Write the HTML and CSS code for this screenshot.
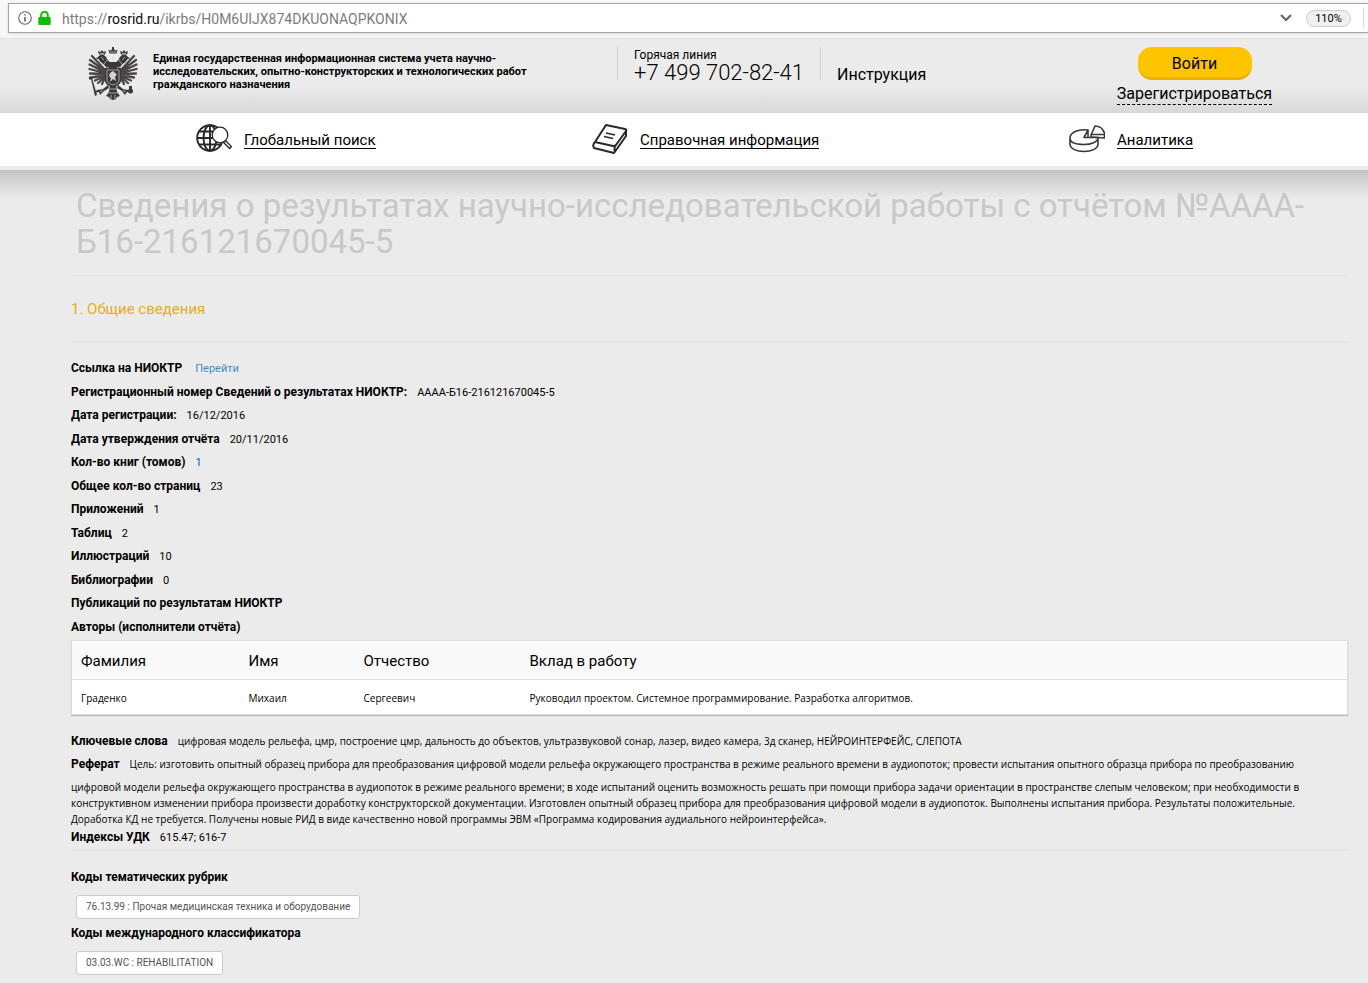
FILE: index.html
```html
<!DOCTYPE html>
<html lang="ru">
<head>
<meta charset="utf-8">
<title>Сведения о результатах научно-исследовательской работы</title>
<link rel="stylesheet" href="styles.css">
</head>
<body>
<div class="browser-bar">
  <div class="address">
    <svg class="info" viewBox="0 0 14 14" width="14" height="14"><circle cx="7" cy="7" r="6.3" fill="none" stroke="#666" stroke-width="1.1"/><path d="M7 6v4.5M7 3.2v1.4" stroke="#555" stroke-width="1.5"/></svg>
    <svg class="lock" viewBox="0 0 13 14" width="13" height="14"><path d="M3.2 7V4a3.3 3.3 0 0 1 6.6 0v3" fill="none" stroke="#12bc00" stroke-width="2"/><rect x=".3" y="6" width="12.4" height="8" rx="1" fill="#12bc00"/></svg>
    <div class="url">https://<span class="domain">rosrid.ru</span>/ikrbs/H0M6UIJX874DKUONAQPKONIX</div>
    <svg class="chevron" viewBox="0 0 12 8" width="12" height="8"><path d="M1 1l5 5 5-5" fill="none" stroke="#666" stroke-width="2.2"/></svg>
    <button class="zoom" type="button">110%</button>
    <span class="bar-divider"></span>
  </div>
</div>

<header class="header">
  <svg class="emblem" viewBox="0 0 50 54" width="50" height="54">
    <g fill="none" stroke="#4a4647" stroke-width="2.300" stroke-linecap="round">
      <path d="M17 23L4 9M17 24L2 13M17 25L1.500 17.500M17 26L1.500 22M17 27L2 26.500M17 28L4 30.500M17 29L7 33.500M17 30L10 36M17 31L14 37"/>
      <path d="M33 23L46 9M33 24L48 13M33 25L48.500 17.500M33 26L48.500 22M33 27L48 26.500M33 28L46 30.500M33 29L43 33.500M33 30L40 36M33 31L36 37"/>
    </g>
    <g fill="#3b3838">
      <path d="M21.500 6.500L20.500 3l2.500.5L24 2V0h2v2l1 1.500 2.500-.5-1 3.500z"/>
      <path d="M19 12c-1-4-6-6-9-2l-2.500 1.500 3 .5c1 3 4 4 6 6l3 5 5.500-1 5.500 1 3-5c2-2 5-3 6-6l3-.5L40 10c-3-4-8-2-9 2-1 2-3 3-3 3h-6s-2-1-3-3z"/>
      <path d="M11 7.500L10 4l2.500 1 1.500-2 1.500 2L18 4l-1 3.500zM33 7.500L32 4l2.500 1L36 3l1.500 2L40 4l-1 3.500z"/>
      <path d="M17 21h16v13c0 3-4 5-8 7-4-2-8-4-8-7z"/>
      <path d="M22 38h6l1 7 3 4-3 1-1 2-3 1-3-1-1-2-3-1 3-4z"/>
      <path d="M20 38l-5 4-6 1-3 3 5-1 1 3 4-4 5-3zM30 38l5 4 5 1 4 3-5-1-2 3-3-4-5-3z"/>
      <path d="M4 31l5 17-2 1-4-17z"/><circle cx="2.500" cy="31" r="1.800"/><circle cx="42.500" cy="44" r="2.500"/><path d="M41 39h3v3h-3z"/>
    </g>
    <g fill="none" stroke="#d4d2d2" stroke-width=".7">
      <path d="M19 23h12v10c0 3-3 4-6 5-3-1-6-2-6-5zM20 12l-4 5M30 12l4 5M22 5h6M25 9v6M12 6.500h4M34 6.500h4M13 10l3 3M37 10l-3 3M22 42h6M21 46h8M23 48v4M27 48v4M15 43l-3 2M35 43l3 2M18 20l3 1M32 20l-3 1"/>
    </g>
    <path d="M22 26l3-2 2 2 2 1-2 3 1 4-3-2-3 3 1-4-2-2z" fill="#d5d3d3"/>
  </svg>
  <p class="system-name">Единая государственная информационная система учета научно-<br>исследовательских, опытно-конструкторских и технологических работ<br>гражданского назначения</p>
  <div class="hotline"><span class="hotline-label">Горячая линия</span><span class="phone">+7 499 702-82-41</span></div>
  <a class="manual" href="#">Инструкция</a>
  <div class="account"><button class="login" type="button">Войти</button><a class="register" href="#">Зарегистрироваться</a></div>
</header>

<nav class="nav">
  <a href="#">
    <svg viewBox="0 0 36 30" width="36" height="30" fill="none" stroke="#2b2728"><g stroke-width="1.900"><circle cx="14" cy="14" r="12.8"/><path d="M14 1v26M1 14h18M3 7.500h18M3 20.500h23"/><ellipse cx="14" cy="14" rx="6.500" ry="12.800"/></g><path d="M28 17l7 7" stroke-width="4"/><path d="M29 18l5 5" stroke="#fff" stroke-width="1.200"/><circle cx="24" cy="11" r="7.800" fill="#fff" stroke-width="1.300"/></svg>
    <span>Глобальный поиск</span></a>
  <a href="#">
    <svg viewBox="0 0 36 30" width="36" height="30" fill="none" stroke="#2b2728" stroke-width="2" stroke-linejoin="round"><path d="M14 1l19 4q2 1 1 2L24 21q-1 1-3 1L3 18z"/><path d="M3 18q-3 3-1 6l20 5 12-17V7M23 22q-1 4 0 6"/><path d="M14 9l9 2M12 12.500l9 2" stroke-width="1.500"/></svg>
    <span>Справочная информация</span></a>
  <a href="#">
    <svg viewBox="0 0 36 30" width="36" height="30" fill="none" stroke="#3a3738" stroke-width="1.600" stroke-linejoin="round"><path d="M19 6C9 4.500 1 9 1 14s7 6.500 14 6.500S29 18 29 13.500L15 13.500l4-7.500v7.500M1 14v6c0 5 7 7.500 14 7.500s14-2.500 14-7.500v-6.500"/><path d="M22 11l4-9c5 0 8 3 9.500 7v5L22 13zM22 10.500h13"/></svg>
    <span>Аналитика</span></a>
</nav>

<main class="content">
  <h1>Сведения о результатах научно-исследовательской работы с отчётом №АААА-<br>Б16-216121670045-5</h1>
  <h2>1. Общие сведения</h2>
  <dl class="facts">
    <div><dt>Ссылка на НИОКТР</dt><dd><a href="#">Перейти</a></dd></div>
    <div><dt>Регистрационный номер Сведений о результатах НИОКТР:</dt><dd>АААА-Б16-216121670045-5</dd></div>
    <div><dt>Дата регистрации:</dt><dd>16/12/2016</dd></div>
    <div><dt>Дата утверждения отчёта</dt><dd>20/11/2016</dd></div>
    <div><dt>Кол-во книг (томов)</dt><dd class="volume">1</dd></div>
    <div><dt>Общее кол-во страниц</dt><dd>23</dd></div>
    <div><dt>Приложений</dt><dd>1</dd></div>
    <div><dt>Таблиц</dt><dd>2</dd></div>
    <div><dt>Иллюстраций</dt><dd>10</dd></div>
    <div><dt>Библиографии</dt><dd>0</dd></div>
    <div><dt>Публикаций по результатам НИОКТР</dt></div>
    <div><dt>Авторы (исполнители отчёта)</dt></div>
  </dl>
  <table class="authors">
    <colgroup><col class="c1"><col class="c2"><col class="c3"><col></colgroup>
    <thead><tr><th>Фамилия</th><th>Имя</th><th>Отчество</th><th>Вклад в работу</th></tr></thead>
    <tbody><tr><td>Граденко</td><td>Михаил</td><td>Сергеевич</td><td>Руководил проектом. Системное программирование. Разработка алгоритмов.</td></tr></tbody>
  </table>
  <div class="abstract">
    <p class="lead"><b>Ключевые слова</b>цифровая модель рельефа, цмр, построение цмр, дальность до объектов, ультразвуковой сонар, лазер, видео камера, 3д сканер, НЕЙРОИНТЕРФЕЙС, СЛЕПОТА</p>
    <p class="lead"><b>Реферат</b>Цель: изготовить опытный образец прибора для преобразования цифровой модели рельефа окружающего пространства в режиме реального времени в аудиопоток; провести испытания опытного образца прибора по преобразованию</p>
    <p class="rest">цифровой модели рельефа окружающего пространства в аудиопоток в режиме реального времени; в ходе испытаний оценить возможность решать при помощи прибора задачи ориентации в пространстве слепым человеком; при необходимости в<br>конструктивном изменении прибора произвести доработку конструкторской документации. Изготовлен опытный образец прибора для преобразования цифровой модели в аудиопоток. Выполнены испытания прибора. Результаты положительные.<br>Доработка КД не требуется. Получены новые РИД в виде качественно новой программы ЭВМ «Программа кодирования аудиального нейроинтерфейса».</p>
    <p class="udk"><b>Индексы УДК</b>615.47; 616-7</p>
  </div>
  <section class="codes">
    <h3>Коды тематических рубрик</h3>
    <span class="tag">76.13.99 : Прочая медицинская техника и оборудование</span>
    <h3>Коды международного классификатора</h3>
    <span class="tag">03.03.WC : REHABILITATION</span>
    <h3>Коды классификаций</h3>
  </section>
</main>
</body>
</html>
```
FILE: styles.css
```css
* { box-sizing: border-box; }
body { margin: 0; background: #ebebeb; color: #000; font-family: Roboto, "Noto Sans", sans-serif; font-size: 11px; }
h1, h2, h3, p, dl, dd { margin: 0; }
a { color: inherit; text-decoration: none; }
button { font-family: inherit; color: inherit; }

.browser-bar { background: #f7f7f7; height: 39px; padding: 3px 0 0 8px; border-bottom: 1px solid #e0e0e0; }
.address { display: flex; align-items: center; height: 30px; padding-left: 9px; background: #fff; border: 1px solid #a5a5a5; border-right: 0; box-shadow: 0 1px 3px #ddd; }
.lock { margin-left: 6px; }
.url { flex: 1; margin-left: 11px; padding-top: 2px; font: 14px Roboto, sans-serif; color: #7c7c7c; white-space: nowrap; }
.domain { color: #0c0c0d; }
.zoom { width: 45px; height: 17px; margin: 0 12px 0 14px; padding: 0; border: 1px solid #ccc; border-radius: 9px; background: #f0f0f0; font-size: 11px; line-height: 15px; }
.bar-divider { width: 5px; height: 22px; border-left: 1px solid #ddd; }

.header { display: grid; grid-template-columns: minmax(0, 65fr) minmax(0, 464fr) minmax(0, 204fr) minmax(0, 297fr) minmax(0, 153fr) minmax(0, 97fr); align-items: start; height: 74px; padding: 8px 0 0 88px; background: linear-gradient(#ebebeb 65%, #d8d8d8); white-space: nowrap; }
.system-name { padding-top: 5px; font-size: 11px; font-weight: 700; line-height: 13px; }
.hotline { display: flex; flex-direction: column; height: 33px; padding-left: 16px; border: solid #d2d2d2; border-width: 0 1px; }
.hotline-label { font-size: 12px; line-height: 16px; }
.phone { font-size: 22px; font-weight: 300; line-height: 20px; }
.manual { padding: 18px 0 0 16px; font-size: 16px; line-height: 20px; }
.account { display: flex; flex-direction: column; align-items: center; }
.login { width: 114px; height: 33px; padding: 2px 0 0; border: 0; border-bottom: 3px solid #e8b200; border-radius: 14px; background: #ffc400; font-size: 16px; }
.register { padding-top: 3px; border-bottom: 1px dashed #000; font-size: 16px; line-height: 21px; }

.nav { display: grid; grid-template-columns: 396fr 477fr 299fr; padding: 11px 0 12px 196px; height: 57px; background: #fff; border-bottom: 4px solid #ebebeb; }
.nav a { display: flex; align-items: flex-start; gap: 12px; font-size: 15px; line-height: 16px; white-space: nowrap; }
.nav span { margin-top: 8px; border-bottom: 1px solid #000; }

.content { padding: 18px 20px 0 71px; background: linear-gradient(#c5c2c3, #ebebeb 28px); }
h1 { padding: 0 0 15px 5px; border-bottom: 1px solid #e2e2e2; color: #c8c8c8; font-size: 33px; font-weight: 400; line-height: 36px; white-space: nowrap; }
h2 { padding: 23px 0 21px; border-bottom: 1px solid #e2e2e2; color: #e5ae1b; font-size: 15px; font-weight: 400; line-height: 21px; }
.facts { padding-top: 15px; }
.facts div { display: flex; gap: 10px; line-height: 23px; }
.facts div:nth-child(odd) { margin-bottom: 1px; }
dt, b, h3 { font-family: Roboto, sans-serif; font-size: 12px; font-weight: 700; }
dd { font-size: 11px; }
dd a { margin-left: 3px; color: #428bca; }
.volume { color: #135a9c; }

.authors { width: 100%; margin-top: 1px; border-collapse: collapse; table-layout: fixed; background: #fff; border: 1px solid #ddd; box-shadow: 0 1px 1px #bbb; text-align: left; }
.c1 { width: 168px; } .c2 { width: 115px; } .c3 { width: 166px; }
th { height: 39px; padding: 2px 9px 0; background: #f9f9f9; border-bottom: 1px solid #ddd; font-size: 15px; font-weight: 400; }
td { height: 35px; padding: 2px 9px 0; font-family: "Open Sans", sans-serif; font-size: 10px; }

.abstract { padding: 15px 0 2px; border-bottom: 1px solid #e2e2e2; white-space: nowrap; }
.abstract b { margin-right: 10px; }
.lead { font-family: "Open Sans", sans-serif; font-size: 10px; line-height: 23px; }
.rest { padding-top: 3px; font-family: "Open Sans", sans-serif; font-size: 10px; line-height: 16px; }
.udk { line-height: 20px; }
.codes { display: flex; flex-direction: column; align-items: flex-start; padding-top: 16px; }
h3 { line-height: 20px; }
.tag { height: 24px; margin: 8px 0 4px 5px; padding: 0 9px; border: 1px solid #ccc; border-radius: 3px; background: #fff; color: #555; font-size: 10px; line-height: 22px; }
```
